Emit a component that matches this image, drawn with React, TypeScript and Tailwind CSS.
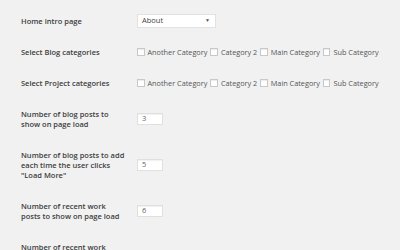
const categories = ["Another Category", "Category 2", "Main Category", "Sub Category"];

type RowProps = {
  label: React.ReactNode;
  children: React.ReactNode;
};

const Row = ({ label, children }: RowProps) => (
  <div className="flex items-center py-[10.5px]">
    <div className="w-[116px] shrink-0 pr-[10px] font-semibold leading-[10px] text-[#3d3d3d]">
      {label}
    </div>
    <div className="flex h-[10px] items-center">{children}</div>
  </div>
);

const CheckboxList = () => (
  <div className="flex items-center gap-[3px] whitespace-nowrap text-[7.3px] text-[#555]">
    {categories.map((name) => (
      <label key={name} className="flex items-center gap-[3px]">
        <span className="block h-[7.5px] w-[7.5px] border border-[#c8c8c8] bg-white shadow-[inset_0_1px_1px_rgba(0,0,0,0.08)]" />
        {name}
      </label>
    ))}
  </div>
);

const NumberBox = ({ value }: { value: string }) => (
  <div className="flex h-[12px] w-[26px] items-center border border-[#e0e0e0] bg-white pl-[4px] text-[#666] shadow-[inset_0_1px_1px_rgba(0,0,0,0.06)]">
    {value}
  </div>
);

export default function App() {
  return (
    <div
      className="h-[250px] w-[400px] overflow-hidden bg-[#f1f1f1] pl-[21px] pt-[5.5px] text-[7.5px]"
      style={{ fontFamily: '"Open Sans", "Noto Sans", sans-serif' }}>
      <Row label="Home intro page">
        <div className="flex h-[14px] w-[79px] items-center justify-between border border-[#e2e2e2] bg-white pl-[4px] pr-[5px] text-[#444]">
          <span>About</span>
          <span className="text-[5px] text-[#555]">▼</span>
        </div>
      </Row>
      <Row label="Select Blog categories">
        <CheckboxList />
      </Row>
      <Row label="Select Project categories">
        <CheckboxList />
      </Row>
      <Row label="Number of blog posts to show on page load">
        <NumberBox value="3" />
      </Row>
      <Row label={`Number of blog posts to add each time the user clicks "Load More"`}>
        <NumberBox value="5" />
      </Row>
      <Row label="Number of recent work posts to show on page load">
        <NumberBox value="6" />
      </Row>
      <Row label="Number of recent work posts to add each time the user clicks">
        <NumberBox value="3" />
      </Row>
    </div>
  );
}
